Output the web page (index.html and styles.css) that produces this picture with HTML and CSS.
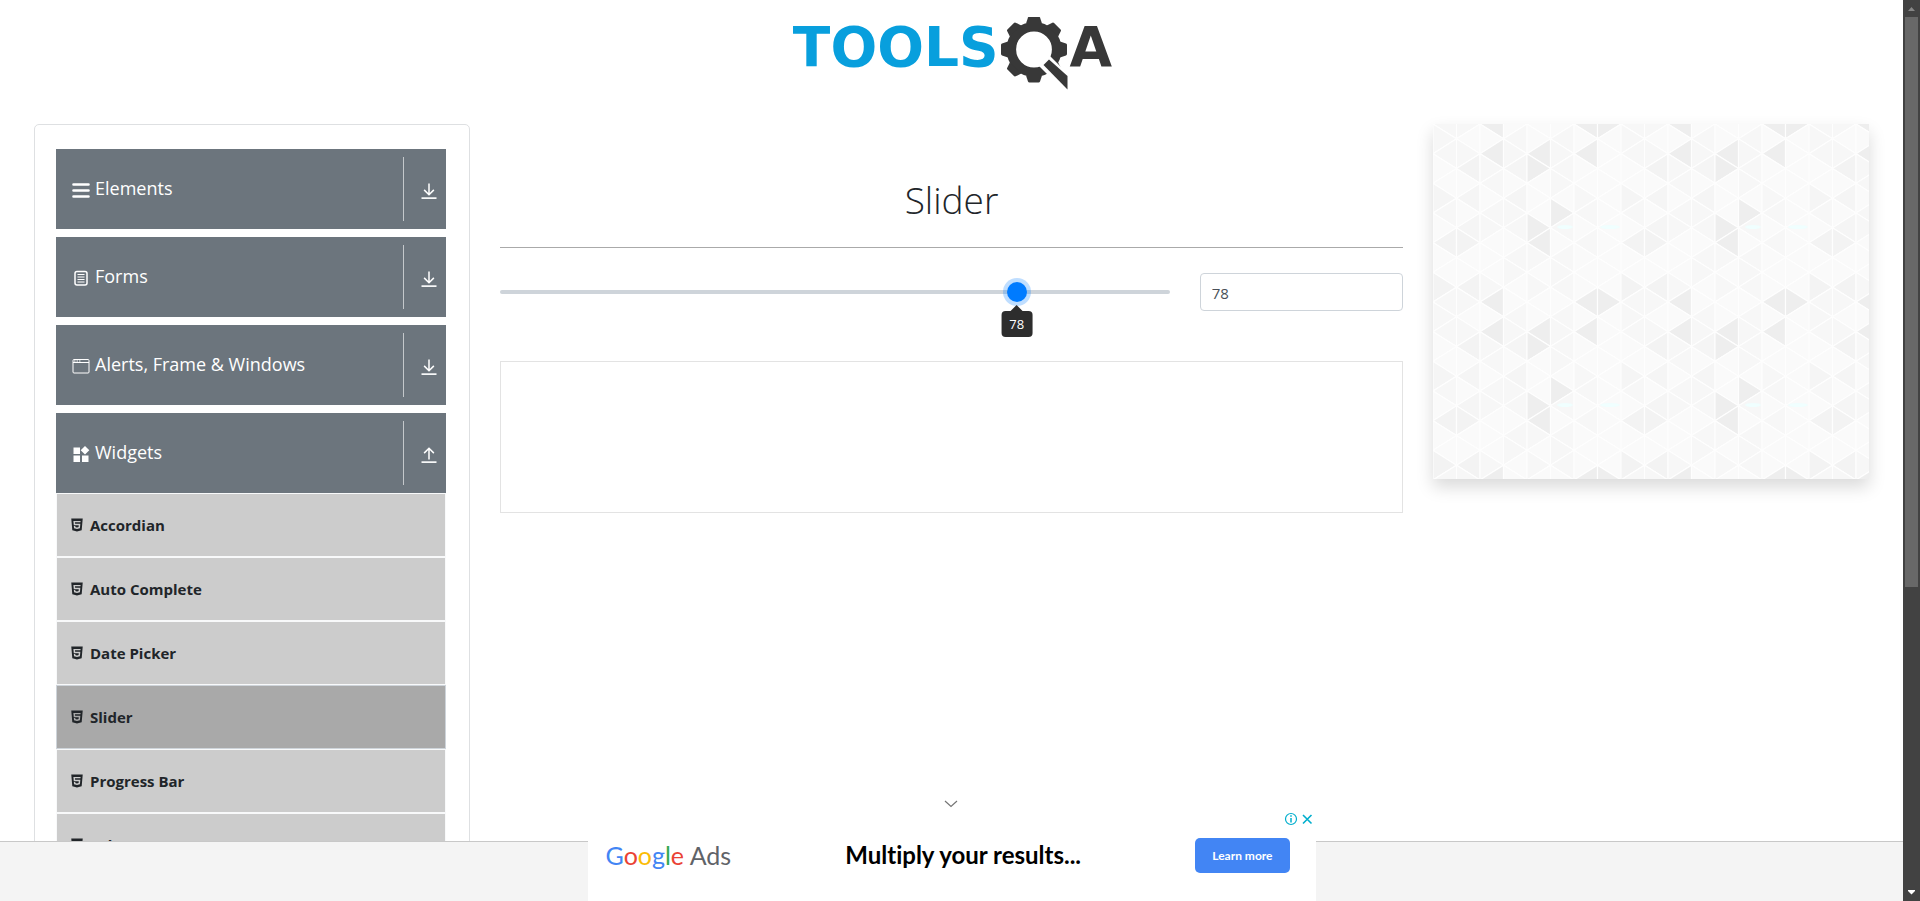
FILE: index.html
```html
<!DOCTYPE html>
<html lang="en">
<head>
<meta charset="utf-8">
<title>ToolsQA - Slider</title>
<link rel="stylesheet" href="styles.css">
</head>
<body>
<svg class="sprite" aria-hidden="true">
  <symbol id="i-down" viewBox="0 0 24 24"><path d="M12 2v15M5.500 10.500l6.500 6.500L18.500 10.500" fill="none" stroke="currentColor" stroke-width="2"/><path d="M2 21.500h20" stroke="currentColor" stroke-width="2.200"/></symbol>
  <symbol id="i-up" viewBox="0 0 24 24"><path d="M12 18V3M5.500 9.500L12 3 18.500 9.500" fill="none" stroke="currentColor" stroke-width="2"/><path d="M2 21.500h20" stroke="currentColor" stroke-width="2.200"/></symbol>
  <symbol id="i-html5" viewBox="0 0 1024 1024"><path fill="currentColor" d="M145 96l66 746.600L512 928l299.600-85.400L878.900 96H145zm595 177.100l-4.800 47.200-1.700 19.500H382.300l8.200 94.200h335.100l-3.300 24.300-21.200 242.200-1.700 16.200-187 51.600v.3h-1.200l-.3.1v-.1h-.1l-188.600-52L310.800 572h91.100l6.500 73.200 102.400 27.700h.4l102-27.600 11.400-118.600H510.900v-.1H306l-22.800-253.500-1.700-24.300h460.300l-1.600 24.300z"/></symbol>
</svg>
<div class="shell">
  <div class="page">
    <header class="top">
      <a class="logo" href="#" aria-label="TOOLSQA">
        <span class="logo-blue">TOOLS</span>
        <svg class="logo-gear" viewBox="0 0 67 73" aria-hidden="true">
          <g transform="translate(33 32.500)" fill="#383838">
            <circle r="22.700" fill="none" stroke="#383838" stroke-width="9.600"/>
            <g id="pair"><path d="M-8-26L-6-32Q-5.600-33-4.600-33H4.600Q5.600-33 6-32L8-26z"/><path d="M-8 26L-6 32Q-5.600 33-4.600 33H4.600Q5.600 33 6 32L8 26z"/></g>
            <use href="#pair" transform="rotate(45)"/><use href="#pair" transform="rotate(90)"/><use href="#pair" transform="rotate(135)"/>
          </g>
          <path d="M47 37L70 60V78L62 73 37 48z" fill="#fff"/>
          <path d="M48 42.500L66.500 59V72.500L42.500 48z" fill="#383838"/>
        </svg>
        <span class="logo-dark">A</span>
      </a>
    </header>
    <div class="columns">
      <nav class="sidebar" aria-label="Sections">
        <button class="group" type="button">
          <svg class="group-icon" viewBox="0 0 18 18"><path d="M1.500 3.500h15M1.500 9.500h15M1.500 15.500h15" stroke="currentColor" stroke-width="2.600" stroke-linecap="round"/></svg>
          <span class="group-name">Elements</span>
          <span class="group-toggle"><svg viewBox="0 0 24 24"><use href="#i-down"/></svg></span>
        </button>
        <button class="group" type="button">
          <svg class="group-icon" viewBox="0 0 18 18"><rect x="3" y="2.500" width="12" height="13.500" rx="2" fill="none" stroke="currentColor" stroke-width="1.500"/><path d="M5.500 5.500h7M5.500 8h7M5.500 10.500h7M5.500 13h7" stroke="currentColor" stroke-width="1.200"/></svg>
          <span class="group-name">Forms</span>
          <span class="group-toggle"><svg viewBox="0 0 24 24"><use href="#i-down"/></svg></span>
        </button>
        <button class="group" type="button">
          <svg class="group-icon" viewBox="0 0 18 18"><rect x="1" y="2.500" width="16" height="13.500" rx="1" fill="none" stroke="currentColor"/><path d="M1 5.500h16" stroke="currentColor"/><path d="M2 4h1.500M4.500 4H6M7 4h1.500" stroke="currentColor"/></svg>
          <span class="group-name">Alerts, Frame &amp; Windows</span>
          <span class="group-toggle"><svg viewBox="0 0 24 24"><use href="#i-down"/></svg></span>
        </button>
        <button class="group group-open" type="button" aria-expanded="true">
          <svg class="group-icon" viewBox="0 0 18 18"><path d="M1.500 2.500H8V9H1.500zM1.500 10.500H8V17H1.500zM10 10.500h6.500V17H10zM13 1l4.300 4.300L13 9.600 8.700 5.300z" fill="currentColor"/></svg>
          <span class="group-name">Widgets</span>
          <span class="group-toggle"><svg viewBox="0 0 24 24"><use href="#i-up"/></svg></span>
        </button>
        <ul class="items">
          <li><a class="item" href="#"><svg><use href="#i-html5"/></svg>Accordian</a></li>
          <li><a class="item" href="#"><svg><use href="#i-html5"/></svg>Auto Complete</a></li>
          <li><a class="item" href="#"><svg><use href="#i-html5"/></svg>Date Picker</a></li>
          <li><a class="item item-active" href="#" aria-current="page"><svg><use href="#i-html5"/></svg>Slider</a></li>
          <li><a class="item" href="#"><svg><use href="#i-html5"/></svg>Progress Bar</a></li>
          <li><a class="item" href="#"><svg><use href="#i-html5"/></svg>Tabs</a></li>
        </ul>
      </nav>
      <main class="content">
        <h1 class="title">Slider</h1>
        <form class="slider-form">
          <div class="range-wrap">
            <input class="range" type="range" min="0" max="100" value="78" aria-label="Slider">
            <output class="tip" style="left: calc(10px + (100% - 20px) * 0.78)">78</output>
          </div>
          <input class="value" type="text" value="78" aria-label="Slider value">
        </form>
        <div class="ad-slot"></div>
      </main>
      <aside class="promo">
        <svg class="promo-art" aria-hidden="true">
          <defs>
            <pattern id="tri" width="188" height="178" patternUnits="userSpaceOnUse"></pattern>
          </defs>
          <rect width="100%" height="100%" fill="url(#tri)"/>
        </svg>
      </aside>
    </div>
  </div>
  <div class="scrollbar" aria-hidden="true">
    <svg class="arrow" viewBox="0 0 17 17"><path d="M5 11h7L8.500 7z" fill="#868686"/></svg>
    <div class="thumb"></div>
    <svg class="arrow" viewBox="0 0 17 17"><path d="M5 6h7v1L8.500 10.500 5 7z" fill="#fff"/></svg>
  </div>
  <footer class="footer">
    <section class="banner" aria-label="Advertisement">
      <button class="collapse" type="button" aria-label="Collapse"><svg viewBox="0 0 14 8"><path d="M1 1l6 5.500L13 1" fill="none" stroke="#757575" stroke-width="1.200"/></svg></button>
      <div class="banner-row">
        <span class="gads"><span class="g-blue">G</span><span class="g-red">o</span><span class="g-yellow">o</span><span class="g-blue">g</span><span class="g-green">l</span><span class="g-red">e</span> Ads</span>
        <strong class="tagline">Multiply your results...</strong>
        <a class="learn" href="#">Learn more</a>
      </div>
      <div class="choices">
        <svg viewBox="0 0 14 14"><circle cx="7" cy="7" r="5.500" fill="none" stroke="#00aecd" stroke-width="1.200"/><path d="M7 6v4.500M7 3.300v1.500" stroke="#00aecd" stroke-width="1.500"/></svg>
        <svg viewBox="0 0 14 14"><path d="M3 3l8.500 8.500M11.500 3L3 11.500" stroke="#00aecd" stroke-width="1.600"/></svg>
      </div>
    </section>
  </footer>
</div>
<script src="pattern.js"></script>
</body>
</html>
```
FILE: pattern.js
```js
// Fills the promo tile with a grid of left- and right-pointing triangles.
const NS = "http://www.w3.org/2000/svg";
const COL = 23.5;
const HALF = 178 / 12;
const shades = {
  "#eeeeee": ["2,0", "6,0", "7,0", "2,2", "4,2", "6,2", "4,3", "5,6", "4,7", "4,8"],
  "#f3f3f3": ["1,3", "0,8", "1,8", "0,11", "1,11"],
  "#f5f5f5": ["1,7", "3,3", "1,5", "3,5", "0,5"],
  "#f7f7f7": ["0,1", "0,2", "1,2", "3,1", "3,2", "5,2", "5,1", "2,3", "5,3", "2,4", "0,0", "5,4", "2,7", "3,6", "2,6", "3,7", "5,7", "6,6", "6,8", "5,9", "4,9", "3,9", "5,10", "3,10", "2,11", "4,11", "1,0", "5,11", "0,6", "6,5"]
};
const lookup = {};
for (const [shade, cells] of Object.entries(shades)) {
  cells.forEach(cell => { lookup[cell] = shade; });
}
const tile = document.getElementById("tri");
for (let c = 0; c < 8; c++) {
  for (let r = 0; r <= 12; r++) {
    const left = (r + c) % 2 === 0;
    const apex = (left ? c : c + 1) * COL;
    const base = (left ? c + 1 : c) * COL;
    const shape = document.createElementNS(NS, "polygon");
    shape.setAttribute("points", `${apex},${r * HALF} ${base},${(r - 1) * HALF} ${base},${(r + 1) * HALF}`);
    shape.setAttribute("fill", lookup[`${c},${r % 12}`] || "#fafafa");
    shape.setAttribute("stroke", "#fefefe");
    shape.setAttribute("stroke-width", "1.2");
    tile.appendChild(shape);
  }
}
for (const [x, rx] of [[132, 8], [177, 10]]) {
  const glint = document.createElementNS(NS, "ellipse");
  glint.setAttribute("cx", x);
  glint.setAttribute("cy", 103);
  glint.setAttribute("rx", rx);
  glint.setAttribute("ry", 2);
  glint.setAttribute("fill", "#f0ffff");
  tile.appendChild(glint);
}
```
FILE: styles.css
```css
* { box-sizing: border-box; }
body {
  margin: 0;
  background: #fff;
  color: #212529;
  font: 16px/24px "Open Sans", "Noto Sans", sans-serif;
}
button, input { font: inherit; }
.sprite { display: none; }

.shell {
  display: grid;
  grid-template-columns: minmax(0, 1fr) 17px;
  height: 100vh;
  overflow: hidden;
}
.page { min-width: 0; overflow: hidden; }

.top {
  display: flex;
  justify-content: center;
  height: 124px;
  padding: 17px 0 0 2px;
}
.logo {
  display: flex;
  align-items: flex-start;
  gap: 2px;
  height: 73px;
  text-decoration: none;
  font: bold 55px/60px "DejaVu Sans", sans-serif;
}
.logo-blue { color: #089fdd; }
.logo-dark { color: #383838; }
.logo-gear { width: 67px; height: 73px; }

.columns {
  display: grid;
  grid-template-columns: repeat(12, minmax(0, 1fr));
  column-gap: 30px;
  align-items: start;
  padding: 0 34px;
}
.sidebar {
  grid-column: span 3;
  padding: 24px 23px 24px 21px;
  border: 1px solid #dee0e2;
  border-radius: 5px;
}
.group {
  display: flex;
  align-items: center;
  width: 100%;
  height: 80px;
  margin: 0 0 8px;
  padding: 8px 0 8px 16px;
  border: 0;
  background: #6c757d;
  color: #fff;
  font-size: 18px;
  text-align: left;
}
.group-open { margin-bottom: 0; }
.group-icon { width: 18px; height: 18px; margin: 2px 5px 0 0; }
.group-name { flex: 1; padding-bottom: 2px; }
.group-toggle {
  display: flex;
  align-items: center;
  justify-content: center;
  height: 64px;
  width: 43px;
  padding: 4px 0 0 7px;
  border-left: 1px solid #c4c8cb;
}
.group-toggle svg { width: 18px; height: 18px; }
.items { margin: 0; padding: 0; list-style: none; }
.item {
  display: flex;
  align-items: center;
  gap: 5px;
  height: 64px;
  padding: 0 12px;
  border: 1px solid #f8f9fa;
  background: #ccc;
  color: #212529;
  font-size: 15px;
  font-weight: 700;
  text-decoration: none;
}
.item svg { width: 16px; height: 16px; }
.item-active { background: #a9a9a9; border-color: #ced4da; }

.content { grid-column: span 6; }
.title {
  margin: 0 0 25px;
  padding: 52px 0 23px;
  border-bottom: 1px solid #aaa;
  font-size: 37px;
  font-weight: 300;
  line-height: 48px;
  text-align: center;
}
.slider-form {
  display: grid;
  grid-template-columns: repeat(4, minmax(0, 1fr));
  column-gap: 30px;
  margin-bottom: 50px;
}
.range-wrap { position: relative; grid-column: span 3; }
.range {
  display: block;
  width: 100%;
  height: 38px;
  margin: 0;
  background: none;
  appearance: none;
}
.range::-webkit-slider-runnable-track {
  height: 4px;
  border-radius: 2px;
  background: #ced4da;
}
.range::-webkit-slider-thumb {
  width: 20px;
  height: 20px;
  margin-top: -8px;
  border-radius: 50%;
  background: #007bff;
  box-shadow: 0 0 0 4px rgba(0, 123, 255, .25);
  appearance: none;
}
.tip {
  position: absolute;
  top: 38px;
  padding: 3px 8px;
  border-radius: 4px;
  background: #2d2d2d;
  color: #fff;
  font-size: 13px;
  line-height: 20px;
  transform: translateX(-50%);
}
.tip::before {
  content: "";
  position: absolute;
  left: 50%;
  bottom: 100%;
  margin-left: -6px;
  border: 6px solid transparent;
  border-top: 0;
  border-bottom-color: #2d2d2d;
}
.value {
  width: 100%;
  height: 38px;
  padding: 7px 11px 5px;
  border: 1px solid #ced4da;
  border-radius: 4px;
  color: #495057;
  font-size: 15px;
}
.ad-slot { height: 152px; border: 1px solid #e3e3e3; }

.promo {
  grid-column: span 3;
  height: 355px;
  box-shadow: 0 8px 16px rgba(0, 0, 0, .15);
}
.promo-art { display: block; width: 100%; height: 100%; }

.scrollbar {
  display: flex;
  flex-direction: column;
  background: #424242;
}
.arrow { width: 17px; height: 17px; }
.thumb { flex: 0 0 auto; height: 570px; margin: 0 2px; background: #686868; }
.arrow:last-child { margin-top: auto; }

.footer {
  position: fixed;
  right: 17px;
  bottom: 0;
  left: 0;
  display: flex;
  justify-content: center;
  align-items: flex-end;
  height: 60px;
  border-top: 1px solid #c8c8c8;
  background: #f4f4f4;
}
.banner {
  position: relative;
  width: 728px;
  max-width: 100%;
  height: 110px;
  padding-top: 9px;
  background: #fff;
}
.collapse {
  display: block;
  margin: 0 auto;
  padding: 0 2px 0 0;
  border: 0;
  background: none;
  line-height: 0;
}
.collapse svg { width: 14px; height: 8px; }
.banner-row {
  display: flex;
  align-items: center;
  justify-content: space-between;
  height: 76px;
  padding: 18px 26px 0 18px;
  font-family: Lato, sans-serif;
  font-variant-ligatures: none;
}
.gads { color: #5f6368; font-size: 25px; line-height: 32px; }
.g-blue { color: #4285f4; }
.g-red { color: #ea4335; }
.g-yellow { color: #fbbc05; }
.g-green { color: #34a853; }
.tagline { color: #000; font-size: 24px; line-height: 32px; }
.learn {
  padding: 0 17px;
  border-radius: 5px;
  background: #4285f4;
  color: #fff;
  font-size: 12px;
  font-weight: 700;
  line-height: 35px;
  text-decoration: none;
}
.choices { position: absolute; top: 21px; right: 2px; display: flex; gap: 2px; }
.choices svg { width: 14px; height: 14px; }
```
